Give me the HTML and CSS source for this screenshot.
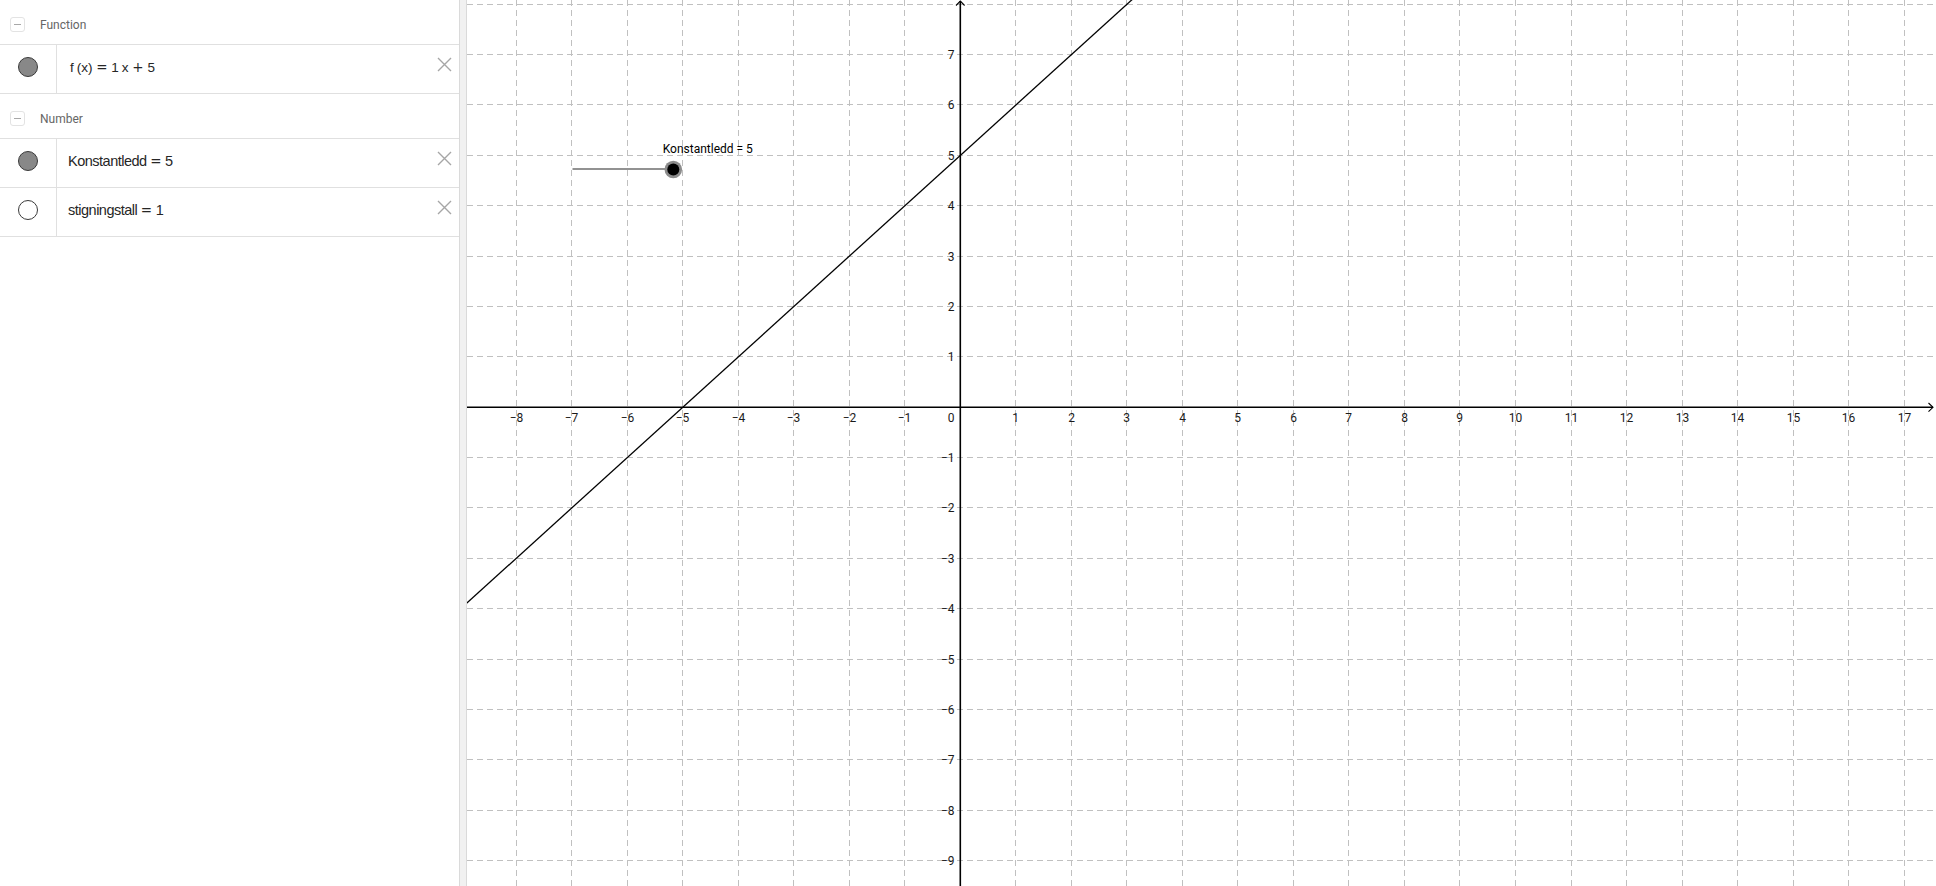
FILE: index.html
```html
<!DOCTYPE html>
<html lang="no">
<head>
<meta charset="utf-8">
<title>GeoGebra</title>
<link rel="stylesheet" href="styles.css">
</head>
<body>
<div class="app">
  <div class="algebra">
    <div class="group-header">
      <span class="collapse"><span class="collapse-dash"></span></span>
      <span class="group-title">Function</span>
    </div>
    <div class="item">
      <div class="marble-cell"><span class="marble filled"></span></div>
      <div class="content"><span class="formula fx">f<span class="thin"></span>(x) <span class="op">=</span> 1<span class="thin"></span>x <span class="op plus">+</span> 5</span></div>
      <span class="close"><svg width="15" height="15" viewBox="0 0 15 15"><path d="M1 1L14 14M14 1L1 14" stroke="#a6a6a6" stroke-width="1.4" fill="none"/></svg></span>
    </div>
    <div class="group-header">
      <span class="collapse"><span class="collapse-dash"></span></span>
      <span class="group-title">Number</span>
    </div>
    <div class="item">
      <div class="marble-cell"><span class="marble filled"></span></div>
      <div class="content"><span class="formula">Konstantledd <span class="op">=</span> 5</span></div>
      <span class="close"><svg width="15" height="15" viewBox="0 0 15 15"><path d="M1 1L14 14M14 1L1 14" stroke="#a6a6a6" stroke-width="1.4" fill="none"/></svg></span>
    </div>
    <div class="item">
      <div class="marble-cell"><span class="marble"></span></div>
      <div class="content"><span class="formula">stigningstall <span class="op">=</span> 1</span></div>
      <span class="close"><svg width="15" height="15" viewBox="0 0 15 15"><path d="M1 1L14 14M14 1L1 14" stroke="#a6a6a6" stroke-width="1.4" fill="none"/></svg></span>
    </div>
  </div>
  <div class="splitter"></div>
  <div class="graphics">
    <svg class="canvas" width="1469" height="886" viewBox="0 0 1469 886">
      <g class="grid">
        <line x1="49.5" y1="0" x2="49.5" y2="886"/>
        <line x1="104.5" y1="0" x2="104.5" y2="886"/>
        <line x1="160.5" y1="0" x2="160.5" y2="886"/>
        <line x1="215.5" y1="0" x2="215.5" y2="886"/>
        <line x1="271.5" y1="0" x2="271.5" y2="886"/>
        <line x1="326.5" y1="0" x2="326.5" y2="886"/>
        <line x1="382.5" y1="0" x2="382.5" y2="886"/>
        <line x1="437.5" y1="0" x2="437.5" y2="886"/>
        <line x1="548.5" y1="0" x2="548.5" y2="886"/>
        <line x1="604.5" y1="0" x2="604.5" y2="886"/>
        <line x1="659.5" y1="0" x2="659.5" y2="886"/>
        <line x1="715.5" y1="0" x2="715.5" y2="886"/>
        <line x1="770.5" y1="0" x2="770.5" y2="886"/>
        <line x1="826.5" y1="0" x2="826.5" y2="886"/>
        <line x1="881.5" y1="0" x2="881.5" y2="886"/>
        <line x1="937.5" y1="0" x2="937.5" y2="886"/>
        <line x1="992.5" y1="0" x2="992.5" y2="886"/>
        <line x1="1048.5" y1="0" x2="1048.5" y2="886"/>
        <line x1="1104.5" y1="0" x2="1104.5" y2="886"/>
        <line x1="1159.5" y1="0" x2="1159.5" y2="886"/>
        <line x1="1215.5" y1="0" x2="1215.5" y2="886"/>
        <line x1="1270.5" y1="0" x2="1270.5" y2="886"/>
        <line x1="1326.5" y1="0" x2="1326.5" y2="886"/>
        <line x1="1381.5" y1="0" x2="1381.5" y2="886"/>
        <line x1="1437.5" y1="0" x2="1437.5" y2="886"/>
        <line x1="0" y1="4.5" x2="1469" y2="4.5"/>
        <line x1="0" y1="54.5" x2="1469" y2="54.5"/>
        <line x1="0" y1="104.5" x2="1469" y2="104.5"/>
        <line x1="0" y1="155.5" x2="1469" y2="155.5"/>
        <line x1="0" y1="205.5" x2="1469" y2="205.5"/>
        <line x1="0" y1="256.5" x2="1469" y2="256.5"/>
        <line x1="0" y1="306.5" x2="1469" y2="306.5"/>
        <line x1="0" y1="356.5" x2="1469" y2="356.5"/>
        <line x1="0" y1="457.5" x2="1469" y2="457.5"/>
        <line x1="0" y1="507.5" x2="1469" y2="507.5"/>
        <line x1="0" y1="558.5" x2="1469" y2="558.5"/>
        <line x1="0" y1="608.5" x2="1469" y2="608.5"/>
        <line x1="0" y1="659.5" x2="1469" y2="659.5"/>
        <line x1="0" y1="709.5" x2="1469" y2="709.5"/>
        <line x1="0" y1="759.5" x2="1469" y2="759.5"/>
        <line x1="0" y1="810.5" x2="1469" y2="810.5"/>
        <line x1="0" y1="860.5" x2="1469" y2="860.5"/>
      </g>
      <g class="axes">
        <line x1="0" y1="407.3" x2="1466" y2="407.3"/>
        <line x1="493.3" y1="1" x2="493.3" y2="886"/>
        <path d="M1461.5 403L1466 407.3L1461.5 411.6" fill="none"/>
        <path d="M489 5.5L493.3 1L497.6 5.5" fill="none"/>
      </g>
      <g class="xlabels">
        <text x="49.5" y="421.5">−8</text>
        <text x="104.5" y="421.5">−7</text>
        <text x="160.5" y="421.5">−6</text>
        <text x="215.5" y="421.5">−5</text>
        <text x="271.5" y="421.5">−4</text>
        <text x="326.5" y="421.5">−3</text>
        <text x="382.5" y="421.5">−2</text>
        <text x="437.5" y="421.5">−1</text>
        <text x="548.5" y="421.5">1</text>
        <text x="604.5" y="421.5">2</text>
        <text x="659.5" y="421.5">3</text>
        <text x="715.5" y="421.5">4</text>
        <text x="770.5" y="421.5">5</text>
        <text x="826.5" y="421.5">6</text>
        <text x="881.5" y="421.5">7</text>
        <text x="937.5" y="421.5">8</text>
        <text x="992.5" y="421.5">9</text>
        <text x="1048.5" y="421.5">10</text>
        <text x="1104.5" y="421.5">11</text>
        <text x="1159.5" y="421.5">12</text>
        <text x="1215.5" y="421.5">13</text>
        <text x="1270.5" y="421.5">14</text>
        <text x="1326.5" y="421.5">15</text>
        <text x="1381.5" y="421.5">16</text>
        <text x="1437.5" y="421.5">17</text>
      </g>
      <g class="ylabels">
        <text x="487.5" y="421.5">0</text>
        <text x="487.5" y="58.8">7</text>
        <text x="487.5" y="108.7">6</text>
        <text x="487.5" y="159.7">5</text>
        <text x="487.5" y="209.7">4</text>
        <text x="487.5" y="260.7">3</text>
        <text x="487.5" y="310.7">2</text>
        <text x="487.5" y="360.7">1</text>
        <text x="487.5" y="461.7">−1</text>
        <text x="487.5" y="511.7">−2</text>
        <text x="487.5" y="562.7">−3</text>
        <text x="487.5" y="612.7">−4</text>
        <text x="487.5" y="663.7">−5</text>
        <text x="487.5" y="713.7">−6</text>
        <text x="487.5" y="763.7">−7</text>
        <text x="487.5" y="814.7">−8</text>
        <text x="487.5" y="864.7">−9</text>
      </g>
      <line class="fn" x1="-6.38" y1="608.78" x2="715.38" y2="-46.03"/>
      <g class="slider">
        <line class="slider-line" x1="105.5" y1="169" x2="206.3" y2="169"/>
        <circle class="slider-halo" cx="206.3" cy="169.5" r="8.8"/>
        <circle class="slider-dot" cx="206.3" cy="169.5" r="6"/>
        <text class="slider-label" x="195.7" y="153.2">Konstantledd = 5</text>
      </g>
    </svg>
  </div>
</div>
</body>
</html>
```

FILE: styles.css
```css
* {
  box-sizing: border-box;
}

html, body {
  margin: 0;
  padding: 0;
  background: #ffffff;
  overflow: hidden;
}

.app {
  display: flex;
  width: 1936px;
  height: 886px;
}

.algebra {
  width: 459px;
  flex: none;
  background: #ffffff;
  font-family: Roboto, "Liberation Sans", sans-serif;
}

.group-header {
  display: flex;
  align-items: center;
  height: 45px;
  padding-top: 5px;
  border-bottom: 1px solid #e0e0e0;
}

.collapse {
  width: 15px;
  height: 15px;
  margin-left: 10px;
  border: 1px solid #e3e3e3;
  border-radius: 3px;
  display: flex;
  align-items: center;
  justify-content: center;
}

.collapse-dash {
  width: 7px;
  height: 1px;
  background: #a8a8a8;
}

.group-title {
  margin-left: 15px;
  font-size: 12px;
  color: #666666;
}

.item {
  display: flex;
  align-items: flex-start;
  height: 49px;
  border-bottom: 1px solid #e0e0e0;
}

.marble-cell {
  width: 57px;
  height: 100%;
  flex: none;
  border-right: 1px solid #e0e0e0;
  display: flex;
  justify-content: center;
  padding-top: 12px;
}

.marble {
  width: 20px;
  height: 20px;
  border-radius: 50%;
  border: 1.3px solid #3a3a3a;
  background: #ffffff;
}

.marble.filled {
  background: #888888;
}

.content {
  flex: 1;
  padding-left: 11px;
  padding-top: 12px;
}

.formula {
  display: inline-block;
  line-height: 20px;
  font-family: "Liberation Sans", Arial, sans-serif;
  font-size: 14.5px;
  letter-spacing: -0.5px;
  color: #262626;
  white-space: pre;
}

.formula.fx {
  font-size: 13.5px;
  letter-spacing: 0;
  padding-left: 2px;
}

.thin {
  display: inline-block;
  width: 3px;
}

.op {
  font-family: "DejaVu Sans", sans-serif;
  font-size: 13.5px;
  letter-spacing: 0;
}

.close {
  flex: none;
  width: 15px;
  height: 15px;
  margin: 12px 7px 0 0;
  display: block;
}

.close svg {
  display: block;
}

.splitter {
  width: 8px;
  flex: none;
  background: #f1f1f1;
  border-left: 1px solid #dadada;
  border-right: 1px solid #dadada;
}

.graphics {
  flex: 1;
  overflow: hidden;
  background: #ffffff;
}

.canvas {
  display: block;
}

.grid line {
  stroke: #c0c0c0;
  stroke-width: 1;
  stroke-dasharray: 6 4;
}

.axes line,
.axes path {
  stroke: #000000;
  stroke-width: 1.6;
}

.axes path {
  stroke-width: 1.1;
}

.xlabels text,
.ylabels text {
  font-family: Roboto, "Liberation Sans", sans-serif;
  font-size: 12px;
  fill: #1a1a1a;
}

.xlabels text {
  text-anchor: middle;
}

.ylabels text {
  text-anchor: end;
}

.fn {
  stroke: #000000;
  stroke-width: 1.3;
}

.slider-line {
  stroke: #6e6e6e;
  stroke-width: 1.4;
}

.slider-halo {
  fill: #8c8c8c;
}

.slider-dot {
  fill: #000000;
}

.slider-label {
  font-family: Roboto, "Liberation Sans", sans-serif;
  font-size: 12px;
  fill: #000000;
}
```
